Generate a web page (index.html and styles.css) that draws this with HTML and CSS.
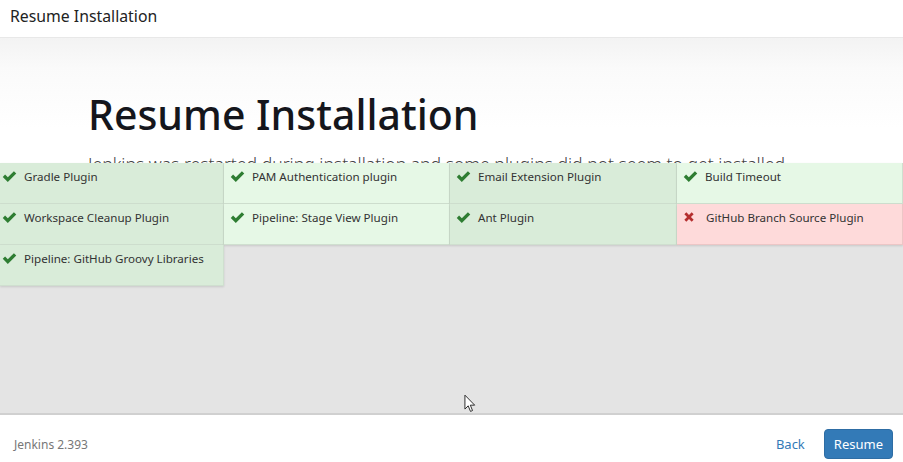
FILE: index.html
```html
<!DOCTYPE html>
<html>
<head>
<meta charset="utf-8">
<link rel="stylesheet" href="styles.css">
</head>
<body>
<div class="page">
  <header class="topbar">Resume Installation</header>
  <main class="main">
    <section class="jumbo">
      <h1>Resume Installation</h1>
      <p class="lead">Jenkins was restarted during installation and some plugins did not seem to get installed.</p>
    </section>
    <section class="progress">
      <div class="grid">
        <div class="cell ok dark"><svg class="ic" viewBox="0 0 16 16"><path d="M0.8 8.4 L3.3 5.9 L6.2 8.8 L12.7 2.3 L15.2 4.8 L6.2 13.8 Z"/></svg>Gradle Plugin</div>
        <div class="cell ok light"><svg class="ic" viewBox="0 0 16 16"><path d="M0.8 8.4 L3.3 5.9 L6.2 8.8 L12.7 2.3 L15.2 4.8 L6.2 13.8 Z"/></svg>PAM Authentication plugin</div>
        <div class="cell ok dark"><svg class="ic" viewBox="0 0 16 16"><path d="M0.8 8.4 L3.3 5.9 L6.2 8.8 L12.7 2.3 L15.2 4.8 L6.2 13.8 Z"/></svg>Email Extension Plugin</div>
        <div class="cell ok light"><svg class="ic" viewBox="0 0 16 16"><path d="M0.8 8.4 L3.3 5.9 L6.2 8.8 L12.7 2.3 L15.2 4.8 L6.2 13.8 Z"/></svg>Build Timeout</div>
        <div class="cell ok dark"><svg class="ic" viewBox="0 0 16 16"><path d="M0.8 8.4 L3.3 5.9 L6.2 8.8 L12.7 2.3 L15.2 4.8 L6.2 13.8 Z"/></svg>Workspace Cleanup Plugin</div>
        <div class="cell ok light"><svg class="ic" viewBox="0 0 16 16"><path d="M0.8 8.4 L3.3 5.9 L6.2 8.8 L12.7 2.3 L15.2 4.8 L6.2 13.8 Z"/></svg>Pipeline: Stage View Plugin</div>
        <div class="cell ok dark"><svg class="ic" viewBox="0 0 16 16"><path d="M0.8 8.4 L3.3 5.9 L6.2 8.8 L12.7 2.3 L15.2 4.8 L6.2 13.8 Z"/></svg>Ant Plugin</div>
        <div class="cell fail"><svg class="ic" viewBox="0 0 16 16"><path d="M1.8 4.4 L4.4 1.8 L8 5.4 L11.6 1.8 L14.2 4.4 L10.6 8 L14.2 11.6 L11.6 14.2 L8 10.6 L4.4 14.2 L1.8 11.6 L5.4 8 Z"/></svg>GitHub Branch Source Plugin</div>
        <div class="cell ok dark"><svg class="ic" viewBox="0 0 16 16"><path d="M0.8 8.4 L3.3 5.9 L6.2 8.8 L12.7 2.3 L15.2 4.8 L6.2 13.8 Z"/></svg>Pipeline: GitHub Groovy Libraries</div>
      </div>
      <svg class="cursor" viewBox="0 0 14 20"><path d="M1 1 L1 16 L4.5 12.5 L7 18.5 L9.2 17.6 L6.8 11.8 L11.5 11.8 Z" fill="#fff" stroke="#222" stroke-width="1"/></svg>
    </section>
  </main>
  <footer class="footer">
    <span class="ver">Jenkins 2.393</span>
    <div class="actions">
      <a class="back">Back</a>
      <button class="btn">Resume</button>
    </div>
  </footer>
</div>
</body>
</html>
```
FILE: styles.css
```css
* { box-sizing: border-box; }
html, body { margin: 0; padding: 0; }
body {
  font-family: "Noto Sans", "Open Sans", "Liberation Sans", sans-serif;
  color: #333;
  background: #fff;
  width: 903px;
  height: 462px;
  overflow: hidden;
}
.page {
  display: flex;
  flex-direction: column;
  height: 462px;
}
.topbar {
  height: 38px;
  flex: none;
  padding: 5px 10px 0;
  font-size: 15.8px;
  color: #222;
  border-bottom: 1px solid #e8e8e8;
  background: #fff;
}
.main {
  flex: 1;
  display: flex;
  flex-direction: column;
  min-height: 0;
}
.jumbo {
  height: 125px;
  flex: none;
  overflow: hidden;
  padding: 0 0 0 88px;
  background: linear-gradient(#f3f3f3 0, #fafafa 30px, #fff 90px);
}
.jumbo h1 {
  margin: 48px 0 0;
  font-size: 41px;
  font-weight: 500;
  line-height: 56px;
  color: #15161c;
}
.lead {
  margin: 9px 0 0;
  font-size: 17.6px;
  font-weight: 300;
  color: #444;
  white-space: nowrap;
  line-height: 26px;
}
.progress {
  flex: 1;
  background: #e4e4e4;
  position: relative;
}
.grid {
  display: grid;
  grid-template-columns: 224px 226px 227px 226px;
  grid-auto-rows: 41px;
}
.cell {
  display: flex;
  align-items: flex-start;
  padding: 6px 0 0 2px;
  font-size: 11.6px;
  line-height: 16px;
  color: #333;
  border-right: 1px solid #cfdfcf;
  border-bottom: 1px solid #cfdfcf;
  box-shadow: 0 1px 2px rgba(0,0,0,0.12);
  white-space: nowrap;
}
.cell.dark { background: #d9ecd9; }
.cell.light { background: #e6f8e6; }
.cell.fail { background: #fedada; border-color: #ecc6c6; }
.ic {
  width: 15px;
  height: 15px;
  margin: 0 7px 0 0;
  flex: none;
}
.ok .ic path { fill: #2e7d32; }
.fail .ic { width: 12px; height: 12px; margin: 1px 11px 0 4px; }
.fail .ic path { fill: #b52f2f; }
.cell.ok:not(:nth-child(4n+1)) .ic { margin-left: 4px; }
.cursor {
  position: absolute;
  left: 464px;
  top: 231px;
  width: 13px;
  height: 19px;
}
.footer {
  height: 49px;
  flex: none;
  border-top: 2px solid #d0d0d0;
  display: flex;
  align-items: center;
  justify-content: space-between;
  padding: 0 10px 0 14px;
  background: #fff;
}
.ver {
  font-size: 12px;
  color: #777;
  margin-top: 12px;
}
.actions {
  display: flex;
  align-items: center;
  gap: 19px;
  margin-top: 10px;
}
.back {
  color: #337ab7;
  font-size: 13px;
}
.btn {
  font-family: inherit;
  font-size: 13px;
  color: #fff;
  background: #337ab7;
  border: 1px solid #2e6da4;
  border-radius: 4px;
  height: 30px;
  padding: 0 9px;
}
```
